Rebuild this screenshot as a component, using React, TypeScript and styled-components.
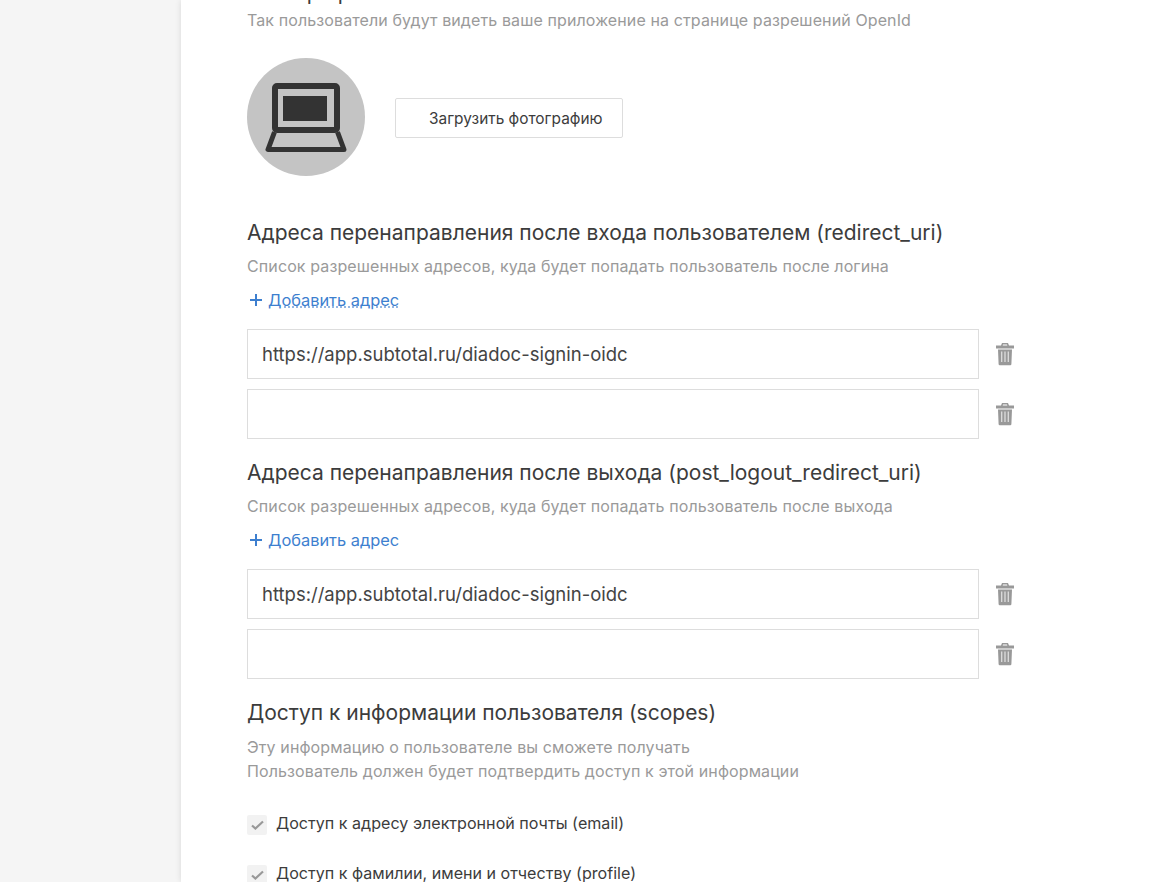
import React from "react";
import styled, { createGlobalStyle } from "styled-components";

const Global = createGlobalStyle`
  html, body { margin: 0; height: 100%; overflow: hidden; background: #f5f5f5; }
  body { font-family: Inter, "Noto Sans", "Liberation Sans", sans-serif; color: #333; }
`;

const Page = styled.div`
  display: flex;
  height: 882px;
  overflow: hidden;
`;
const Side = styled.aside`
  width: 181px;
  flex: none;
  background: #f5f5f5;
`;
const Card = styled.main`
  width: 993px;
  flex: none;
  background: #fff;
  box-shadow: 0 0 6px rgba(0, 0, 0, 0.12);
  padding: 0 0 0 66px;
  box-sizing: border-box;
  overflow: hidden;
`;
const Scrolled = styled.div`
  margin-top: -21px;
`;
const Heading = styled.h2`
  margin: 0 0 7px;
  font-size: 21px;
  font-weight: 400;
  line-height: 28px;
  color: #3c3c3c;
`;
const TopHeading = styled(Heading)`
  margin-bottom: 1px;
`;
const Hint = styled.p`
  margin: 0;
  font-size: 16px;
  letter-spacing: 0.11px;
  line-height: 24px;
  color: #9a9a9a;
`;
const PhotoRow = styled.div`
  display: flex;
  align-items: center;
  gap: 30px;
  margin: 26px 0 43px;
`;
const Avatar = styled.div`
  width: 118px;
  height: 118px;
  border-radius: 50%;
  background: #c4c4c4;
  display: flex;
  align-items: center;
  justify-content: center;
`;
const UploadButton = styled.button`
  width: 228px;
  height: 40px;
  margin-top: 2px;
  background: #fff;
  border: 1px solid #ddd;
  border-radius: 2px;
  font: inherit;
  font-size: 15.4px;
  color: #3c3c3c;
  padding: 0 0 0 33px;
  text-align: left;
`;
const AddLink = styled.a<{ $dashed?: boolean }>`
  display: flex;
  align-items: center;
  margin: 12px 0 19px;
  height: 20px;
  padding-left: 3px;
  font-size: 16.4px;
  color: #3d7fcf;
  span {
    padding-left: 6px;
    ${(p) =>
      p.$dashed
        ? "text-decoration: underline dotted #7ba7de; text-underline-offset: 1px; text-decoration-skip-ink: auto;"
        : ""}
  }
`;
const Row = styled.div`
  display: flex;
  align-items: center;
  gap: 16px;
  margin-bottom: 10px;
`;
const Field = styled.input`
  width: 732px;
  height: 50px;
  box-sizing: border-box;
  border: 1px solid #ddd;
  padding: 0 14px;
  font: inherit;
  font-size: 18.5px;
  color: #444;
  outline: none;
`;
const Section = styled.section`
  margin-bottom: 20px;
`;
const ScopeIntro = styled.div`
  margin: 8px 0 30px;
`;
const Check = styled.div`
  display: flex;
  align-items: center;
  gap: 9px;
  height: 20px;
  margin-bottom: 30px;
  font-size: 16.1px;
  color: #3c3c3c;
`;
const CheckBox = styled.span`
  width: 20px;
  height: 20px;
  margin-top: 4px;
  border-radius: 2px;
  background: #f2f2f2;
  display: flex;
  align-items: center;
  justify-content: center;
`;

const Trash = () => (
  <svg width="20" height="24" viewBox="0 0 20 24" aria-hidden="true">
    <path fill="#999" d="M7 1h6l1 2.5h5V6.5H1V3.5h5zM8 2.5L7.7 3.5h4.6L12 2.5zM3 7.5h14l-.6 14.5a1.2 1.2 0 0 1-1.2 1.2H4.8a1.2 1.2 0 0 1-1.2-1.2z" />
    <path stroke="#ddd" strokeWidth="1.3" d="M6.7 9.5v10.5M10 9.5v10.5M13.3 9.5v10.5" />
  </svg>
);
const Plus = () => (
  <svg width="12" height="12" viewBox="0 0 12 12" aria-hidden="true">
    <path stroke="#3d7fcf" strokeWidth="2" d="M6 0v12M0 6h12" />
  </svg>
);
const Tick = () => (
  <svg width="15" height="12" viewBox="0 0 15 12" aria-hidden="true">
    <path fill="none" stroke="#999" strokeWidth="2.2" d="M2 6.5l3.4 3L13 2.5" />
  </svg>
);
const Laptop = () => (
  <svg width="82" height="69" viewBox="0 0 82 69" aria-hidden="true">
    <rect x="10" y="3" width="62" height="44" rx="2" fill="none" stroke="#333" strokeWidth="6" />
    <rect x="18" y="13" width="44" height="25" fill="#333" />
    <path d="M9.5 49L3 66.5h76L72.5 49" fill="none" stroke="#333" strokeWidth="5" strokeLinejoin="round" />
  </svg>
);

const Address = ({ value = "" }: { value?: string }) => (
  <Row>
    <Field defaultValue={value} />
    <Trash />
  </Row>
);

export default function App() {
  return (
    <Page>
      <Global />
      <Side />
      <Card>
        <Scrolled>
          <TopHeading>Аватар приложения</TopHeading>
          <Hint>Так пользователи будут видеть ваше приложение на странице разрешений OpenId</Hint>
          <PhotoRow>
            <Avatar><Laptop /></Avatar>
            <UploadButton>Загрузить фотографию</UploadButton>
          </PhotoRow>
          <Section>
            <Heading>Адреса перенаправления после входа пользователем (redirect_uri)</Heading>
            <Hint>Список разрешенных адресов, куда будет попадать пользователь после логина</Hint>
            <AddLink $dashed><Plus /><span>Добавить адрес</span></AddLink>
            <Address value="https://app.subtotal.ru/diadoc-signin-oidc" />
            <Address />
          </Section>
          <Section>
            <Heading>Адреса перенаправления после выхода (post_logout_redirect_uri)</Heading>
            <Hint>Список разрешенных адресов, куда будет попадать пользователь после выхода</Hint>
            <AddLink><Plus /><span>Добавить адрес</span></AddLink>
            <Address value="https://app.subtotal.ru/diadoc-signin-oidc" />
            <Address />
          </Section>
          <Heading>Доступ к информации пользователя (scopes)</Heading>
          <ScopeIntro>
            <Hint>Эту информацию о пользователе вы сможете получать</Hint>
            <Hint>Пользователь должен будет подтвердить доступ к этой информации</Hint>
          </ScopeIntro>
          <Check><CheckBox><Tick /></CheckBox>Доступ к адресу электронной почты (email)</Check>
          <Check><CheckBox><Tick /></CheckBox>Доступ к фамилии, имени и отчеству (profile)</Check>
        </Scrolled>
      </Card>
    </Page>
  );
}
